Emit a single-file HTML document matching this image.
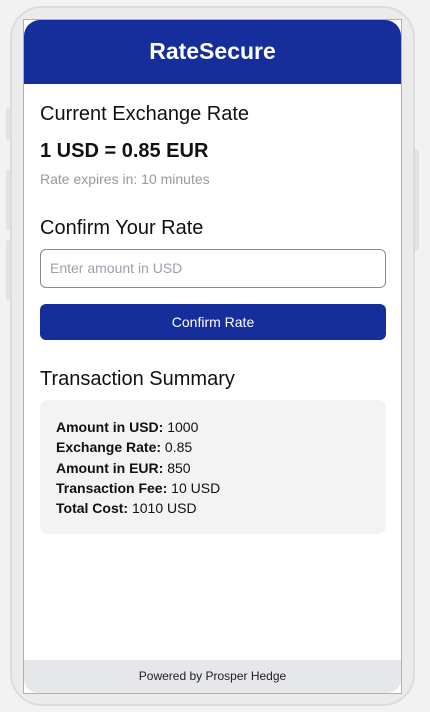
<!DOCTYPE html>
<html><head><meta charset="utf-8"><style>
*{margin:0;padding:0;box-sizing:border-box}
body{width:430px;height:712px;background:#f2f2f2;font-family:"Liberation Sans",sans-serif;position:relative;overflow:hidden}
.phone{position:absolute;left:10px;top:6px;width:405px;height:700px;border:2px solid #dcdcdc;border-radius:32px;background:#ebebeb}
.btn{position:absolute;background:#e2e2e2;border-radius:2px}
.screen{position:absolute;left:23px;top:19px;width:379px;height:675px;border:1px solid #8ab4f8;background:#fff;overflow:hidden}
.hdr{position:absolute;left:0;top:0;width:377px;height:64px;background:#152e9c;border-radius:16px 16px 0 0;color:#fff;font-weight:bold;font-size:23px;text-align:center;line-height:62px}
.t{position:absolute;left:16px;color:#111}
.h2{font-size:20px}
.inp{position:absolute;left:16px;top:229px;width:346px;height:39px;border:1.5px solid #8a8a8a;border-radius:6px;color:#9aa0aa;font-size:14px;line-height:36px;padding-left:9px}
.cbtn{position:absolute;left:16px;top:284px;width:346px;height:36px;background:#152e9c;border-radius:6px;color:#fff;font-size:14px;text-align:center;line-height:36px}
.box{position:absolute;left:16px;top:380px;width:346px;height:134px;background:#f3f3f3;border-radius:8px;padding:17px 16px;font-size:14px;line-height:20.3px;color:#111}
.foot{position:absolute;left:0;bottom:0;width:377px;height:33px;background:#e6e7eb;border-radius:0 0 14px 14px;text-align:center;font-size:12px;line-height:32px;color:#222}
</style></head><body>
<div class="btn" style="left:6px;top:108px;width:5px;height:32px"></div>
<div class="btn" style="left:6px;top:170px;width:5px;height:60px"></div>
<div class="btn" style="left:6px;top:240px;width:5px;height:60px"></div>
<div class="btn" style="left:414px;top:150px;width:5px;height:100px"></div>
<div class="phone"></div>
<div class="screen">
<div class="hdr">RateSecure</div>
<div class="t h2" style="top:83px">Current Exchange Rate</div>
<div class="t" style="top:120px;font-size:20px;font-weight:bold">1 USD = 0.85 EUR</div>
<div class="t" style="top:151px;font-size:14px;color:#999">Rate expires in: 10 minutes</div>
<div class="t h2" style="top:197px">Confirm Your Rate</div>
<div class="inp">Enter amount in USD</div>
<div class="cbtn">Confirm Rate</div>
<div class="t h2" style="top:348px">Transaction Summary</div>
<div class="box"><b>Amount in USD:</b> 1000<br><b>Exchange Rate:</b> 0.85<br><b>Amount in EUR:</b> 850<br><b>Transaction Fee:</b> 10 USD<br><b>Total Cost:</b> 1010 USD</div>
<div class="foot">Powered by Prosper Hedge</div>
</div>
</body></html>
